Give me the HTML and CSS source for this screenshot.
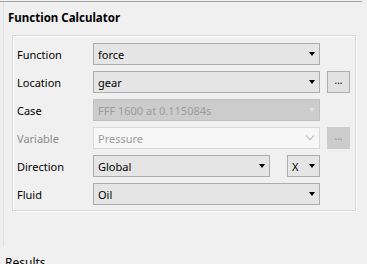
FILE: index.html
```html
<!DOCTYPE html>
<html lang="en">
<head>
  <meta charset="UTF-8">
  <title>Function Calculator</title>
  <link rel="stylesheet" href="styles.css">
</head>
<body>
  <div class="topline"></div>
  <div class="panel">
    <div class="title">Function Calculator</div>

    <!-- Group box with inputs -->
    <div class="group">
      <div class="row">
        <span class="label">Function</span>
        <div class="combo wide"><span class="value">force</span><span class="arrow"></span></div>
      </div>
      <div class="row">
        <span class="label">Location</span>
        <div class="combo wide"><span class="value">gear</span><span class="arrow"></span></div>
        <button class="dots">...</button>
      </div>
      <div class="row">
        <span class="label">Case</span>
        <div class="combo wide disabled"><span class="value">FFF 1600 at 0.115084s</span><span class="arrow"></span></div>
      </div>
      <div class="row">
        <span class="label off">Variable</span>
        <div class="combo wide editable"><span class="value">Pressure</span><span class="chevron"></span></div>
        <button class="dots" disabled>...</button>
      </div>
      <div class="row">
        <span class="label">Direction</span>
        <div class="combo mid"><span class="value">Global</span><span class="arrow"></span></div>
        <div class="combo small"><span class="value">X</span><span class="arrow"></span></div>
      </div>
      <div class="row">
        <span class="label">Fluid</span>
        <div class="combo wide"><span class="value">Oil</span><span class="arrow"></span></div>
      </div>
    </div>
  </div>
  <div class="results">Results</div>
</body>
</html>
```

FILE: styles.css
```css
* {
  box-sizing: border-box;
}
body {
  margin: 0;
  background: #f0f0f0;
  font-family: "Noto Sans", "Open Sans", sans-serif;
  font-size: 11px;
  color: #000;
  overflow: hidden;
  height: 264px;
}
.topline {
  width: 362px;
  height: 1px;
  margin-top: 1px;
  background: #a3a3a3;
}
.panel {
  margin-left: 3px;
  width: 358px;
  height: 244px;
  padding: 8px 0 0 4px;
  border-left: 1px solid #e2e2e2;
}
.title {
  font-weight: bold;
  font-size: 11.5px;
  line-height: 16px;
}
/* Group box */
.group {
  margin: 9px 0 0 4px;
  width: 344px;
  padding: 7px 0 5px 4px;
  border: 1px solid #d8d8d8;
  box-shadow: inset 1px 1px 0 #fff, 1px 1px 0 #fff;
  display: flex;
  flex-direction: column;
  gap: 6px;
}
.row {
  display: flex;
  align-items: center;
  height: 22px;
}
.label {
  width: 76px;
  flex: none;
}
.label.off {
  color: #8a8a8a;
}
.combo {
  position: relative;
  height: 22px;
  display: flex;
  align-items: center;
  padding-left: 4px;
  background: #e5e5e5;
  border: 1px solid #adadad;
}
.combo.wide { width: 227px; }
.combo.mid { width: 177px; }
.combo.small { width: 33px; margin-left: 17px; }
.value {
  flex: 1;
  white-space: nowrap;
}
.arrow {
  width: 0;
  height: 0;
  margin-right: 4px;
  border-left: 3.5px solid transparent;
  border-right: 3.5px solid transparent;
  border-top: 4px solid #000;
}
.combo.disabled {
  background: #cccccc;
  border-color: #bfbfbf;
  color: #9c9c9c;
}
.combo.disabled .arrow {
  border-top-color: #e2e2e2;
}
.combo.editable {
  background: #f7f7f7;
  border-color: #d9d9d9;
  color: #9a9a9a;
}
.chevron {
  width: 6px;
  height: 6px;
  margin: 0 6px 4px 0;
  border-right: 1px solid #b8b8b8;
  border-bottom: 1px solid #b8b8b8;
  transform: rotate(45deg);
}
.dots {
  width: 23px;
  height: 22px;
  margin-left: 7px;
  padding: 0 0 4px;
  font: inherit;
  font-size: 10px;
  background: #e1e1e1;
  border: 1px solid #adadad;
  color: #000;
}
.dots:disabled {
  background: #cccccc;
  border-color: #cccccc;
  color: #8d8d8d;
}
.results {
  margin: 9px 0 0 5px;
  font-size: 12px;
  line-height: 16px;
}
```
